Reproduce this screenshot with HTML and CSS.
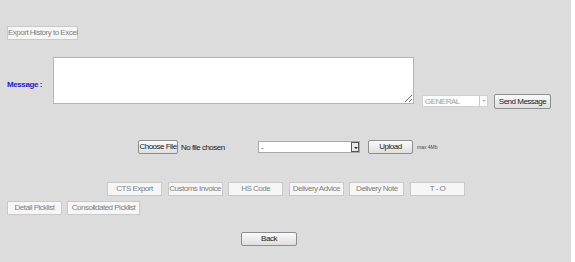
FILE: index.html
```html
<!DOCTYPE html>
<html lang="en">
<head>
    <meta charset="UTF-8">
    <title>Message History</title>
    <link rel="stylesheet" href="styles.css">
</head>
<body>
    <div class="page">
        <!-- Export -->
        <div class="row export-row">
            <button class="btn btn-off btn-export">Export History to Excel</button>
        </div>

        <!-- Message -->
        <div class="row message-row">
            <label class="msg-label" for="msg">Message :</label>
            <textarea id="msg" class="msg-box"></textarea>
            <div class="fake-select general">
                <span>GENERAL</span>
                <span class="arrow arrow-off"></span>
            </div>
            <button class="btn btn-on btn-send">Send Message</button>
        </div>

        <!-- Upload -->
        <div class="row upload-row">
            <button class="btn btn-on btn-file">Choose File</button>
            <span class="file-name">No file chosen</span>
            <div class="fake-select doc-type">
                <span>-</span>
                <span class="arrow"></span>
            </div>
            <button class="btn btn-on btn-upload">Upload</button>
            <span class="max-size">max 4Mb</span>
        </div>

        <!-- Documents -->
        <div class="row docs-row">
            <button class="btn btn-off btn-doc">CTS Export</button>
            <button class="btn btn-off btn-doc">Customs Invoice</button>
            <button class="btn btn-off btn-doc">HS Code</button>
            <button class="btn btn-off btn-doc">Delivery Advice</button>
            <button class="btn btn-off btn-doc">Delivery Note</button>
            <button class="btn btn-off btn-doc">T - O</button>
        </div>

        <div class="row picklist-row">
            <button class="btn btn-off btn-detail">Detail Picklist</button>
            <button class="btn btn-off btn-consol">Consolidated Picklist</button>
        </div>

        <div class="row back-row">
            <button class="btn btn-on btn-back">Back</button>
        </div>
    </div>
</body>
</html>
```

FILE: styles.css
```css
html {
    background: #ffffff;
}

body {
    margin: 0;
    padding: 0;
    font-family: "Liberation Sans", Arial, sans-serif;
    font-size: 8px;
    letter-spacing: -0.5px;
    color: #333;
}

.page {
    width: 571px;
    height: 262px;
    background: #dcdcdc;
    box-sizing: border-box;
    padding-top: 26px;
}

.row {
    display: flex;
    align-items: center;
}

.btn {
    font-family: "Liberation Sans", Arial, sans-serif;
    font-size: 8px;
    letter-spacing: -0.5px;
    height: 14px;
    padding: 0;
    box-sizing: border-box;
    line-height: 12px;
    text-align: center;
    white-space: nowrap;
}

.btn-off {
    background: #f6f6f6;
    border: 1px solid #c9c9c9;
    color: #808080;
}

.btn-on {
    background: linear-gradient(#fafafa, #dedede);
    border: 1px solid #8e8e8e;
    border-radius: 2px;
    color: #222;
}

/* export */
.export-row {
    padding-left: 7px;
}

.btn-export {
    width: 71px;
}

/* message */
.message-row {
    margin-top: 17px;
    align-items: flex-end;
}

.msg-label {
    width: 46px;
    padding-left: 7px;
    margin-bottom: 15px;
    color: #1a1ac8;
    font-weight: bold;
    letter-spacing: -0.4px;
}

.msg-box {
    width: 361px;
    height: 47px;
    margin: 0;
    box-sizing: border-box;
    background: #fff;
    border: 1px solid #b5b5b5;
    resize: both;
}

.fake-select {
    display: flex;
    align-items: center;
    justify-content: space-between;
    box-sizing: border-box;
    background: #fff;
    border: 1px solid #a9a9a9;
    height: 12px;
    padding-left: 2px;
}

.general {
    width: 66px;
    margin-left: 8px;
    margin-bottom: -3px;
    border-color: #d0d0d0;
    color: #9a9a9a;
}

.arrow {
    width: 8px;
    height: 10px;
    box-sizing: border-box;
    border-left: 1px solid #c8c8c8;
    background: #f0f0f0;
    position: relative;
}

.arrow::after {
    content: "";
    position: absolute;
    left: 2px;
    top: 4px;
    border-left: 2px solid transparent;
    border-right: 2px solid transparent;
    border-top: 2px solid #222;
}

.arrow-off {
    background: #fafafa;
}

.arrow-off::after {
    border-top-color: #b8b8b8;
}

.btn-send {
    width: 57px;
    height: 15px;
    margin-left: 6px;
    margin-bottom: -5px;
}

/* upload */
.upload-row {
    margin-top: 36px;
}

.btn-file {
    width: 40px;
    margin-left: 138px;
}

.file-name {
    width: 77px;
    margin-left: 3px;
    color: #222;
}

.doc-type {
    width: 102px;
    color: #444;
}

.doc-type .arrow {
    border: 1px solid #555;
    background: #e8e8e8;
}

.btn-upload {
    width: 45px;
    margin-left: 8px;
}

.max-size {
    margin-left: 4px;
    font-size: 5px;
    letter-spacing: 0;
    color: #444;
}

/* documents */
.docs-row {
    margin-top: 28px;
    padding-left: 107px;
    gap: 5.6px;
}

.btn-doc {
    width: 55px;
}

.picklist-row {
    margin-top: 5px;
    padding-left: 7px;
    gap: 5px;
}

.btn-detail {
    width: 55px;
}

.btn-consol {
    width: 73px;
}

.back-row {
    margin-top: 17px;
    padding-left: 241px;
}

.btn-back {
    width: 56px;
}
```
